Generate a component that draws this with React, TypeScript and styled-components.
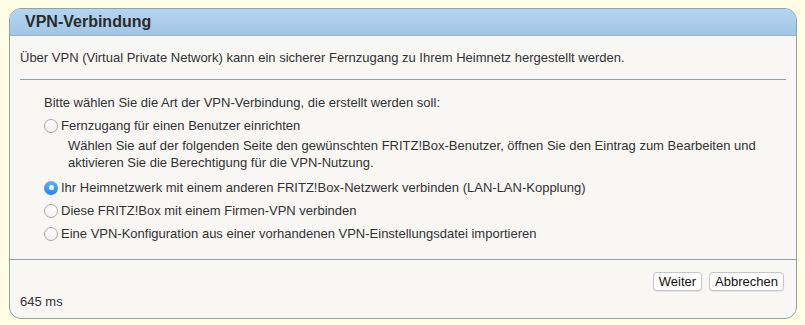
import React, { useState } from 'react'
import styled, { createGlobalStyle } from 'styled-components'

const GlobalStyle = createGlobalStyle`
  html, body {
    margin: 0;
    padding: 0;
    background: #fffde3;
  }
  body {
    font-family: 'Liberation Sans', Arial, sans-serif;
    font-size: 13px;
    color: #333;
  }
`

const Page = styled.div`
  padding: 8px 8px 7px 9px;
`

const Panel = styled.div`
  border: 1px solid #8ea3a6;
  border-radius: 12px;
  background: #f8f7f3;
  overflow: hidden;
`

const Header = styled.div`
  height: 26px;
  background: linear-gradient(#b4d5f1, #a3c6e6);
  border-bottom: 1px solid #98b4c8;
  display: flex;
  align-items: center;
  padding-left: 15px;
`

const Title = styled.h1`
  margin: 0;
  font-size: 16px;
  font-weight: bold;
  color: #2a2a2a;
`

const Content = styled.div`
  padding: 0 10px;
`

const Intro = styled.p`
  margin: 0;
  padding: 14px 0 13px;
  line-height: 16px;
`

const Divider = styled.hr`
  margin: 0;
  border: none;
  border-top: 1px solid #8ea3a6;
`

const Options = styled.div`
  padding: 15px 0 14px 24px;
  display: flex;
  flex-direction: column;
`

const Lead = styled.div`
  line-height: 16px;
  margin-bottom: 3px;
`

const OptionRow = styled.label`
  display: flex;
  align-items: center;
  height: 23px;
  cursor: pointer;
`

const RadioDot = styled.span<{ $checked: boolean }>`
  width: 14px;
  height: 14px;
  margin-right: 3px;
  border-radius: 50%;
  box-sizing: border-box;
  flex: none;
  display: flex;
  align-items: center;
  justify-content: center;
  border: ${({ $checked }) => ($checked ? 'none' : '1px solid #a8a8a8')};
  background: ${({ $checked }) =>
    $checked ? 'linear-gradient(#69b1fa, #1f84f0)' : 'linear-gradient(#ffffff, #f1f1f1)'};

  &::after {
    content: '';
    width: 5px;
    height: 5px;
    border-radius: 50%;
    background: #fff;
    display: ${({ $checked }) => ($checked ? 'block' : 'none')};
  }
`

const Hint = styled.p`
  margin: 0 0 5px 24px;
  line-height: 17px;
`

const Footer = styled.div`
  border-top: 1px solid #8ea3a6;
  padding: 12px 12px 0 10px;
  height: 46px;
  display: flex;
  flex-direction: column;
`

const Buttons = styled.div`
  display: flex;
  justify-content: flex-end;
  gap: 7px;
`

const Button = styled.button`
  font-family: 'Liberation Sans', Arial, sans-serif;
  font-size: 13px;
  color: #111;
  background: #fff;
  border: 1px solid #c6c6c6;
  border-radius: 4px;
  height: 19px;
  padding: 0 5px;
  line-height: 17px;
  box-shadow: 0 1px 1px rgba(0, 0, 0, 0.08);
`

const Timing = styled.div`
  margin-top: 3px;
  line-height: 16px;
`

const options = [
  'Fernzugang für einen Benutzer einrichten',
  'Ihr Heimnetzwerk mit einem anderen FRITZ!Box-Netzwerk verbinden (LAN-LAN-Kopplung)',
  'Diese FRITZ!Box mit einem Firmen-VPN verbinden',
  'Eine VPN-Konfiguration aus einer vorhandenen VPN-Einstellungsdatei importieren',
]

export default function App() {
  const [selected, setSelected] = useState(1)

  return (
    <>
      <GlobalStyle />
      <Page>
        <Panel>
          <Header>
            <Title>VPN-Verbindung</Title>
          </Header>
          <Content>
            <Intro>
              Über VPN (Virtual Private Network) kann ein sicherer Fernzugang zu Ihrem Heimnetz
              hergestellt werden.
            </Intro>
            <Divider />
            <Options>
              <Lead>Bitte wählen Sie die Art der VPN-Verbindung, die erstellt werden soll:</Lead>
              {options.map((text, i) => (
                <React.Fragment key={text}>
                  <OptionRow onClick={() => setSelected(i)}>
                    <RadioDot $checked={selected === i} />
                    {text}
                  </OptionRow>
                  {i === 0 && (
                    <Hint>
                      Wählen Sie auf der folgenden Seite den gewünschten FRITZ!Box-Benutzer, öffnen
                      Sie den Eintrag zum Bearbeiten und
                      <br />
                      aktivieren Sie die Berechtigung für die VPN-Nutzung.
                    </Hint>
                  )}
                </React.Fragment>
              ))}
            </Options>
          </Content>
          <Footer>
            <Buttons>
              <Button>Weiter</Button>
              <Button>Abbrechen</Button>
            </Buttons>
            <Timing>645 ms</Timing>
          </Footer>
        </Panel>
      </Page>
    </>
  )
}
